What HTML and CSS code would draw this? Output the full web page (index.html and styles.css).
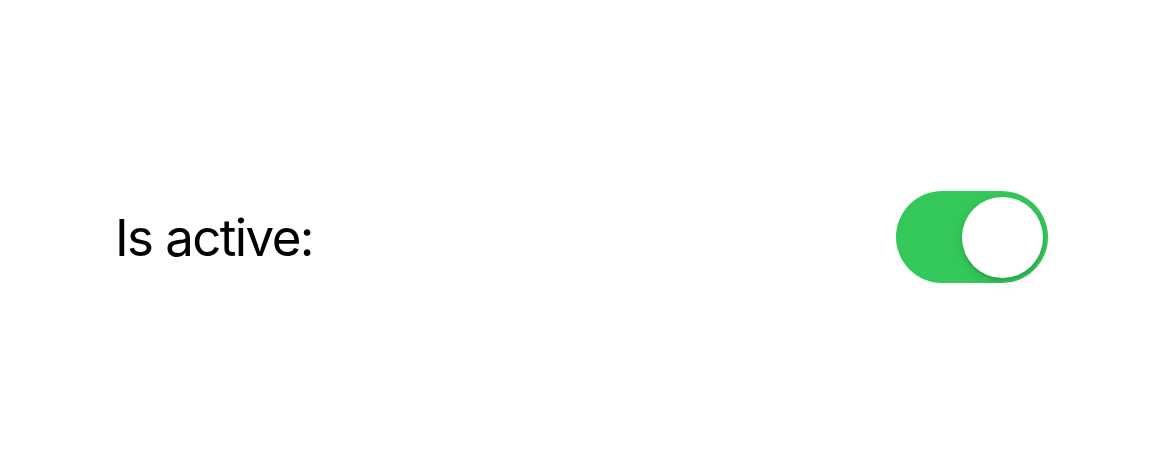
FILE: index.html
```html
<!DOCTYPE html>
<html>
<head>
<meta charset="utf-8">
<link rel="stylesheet" href="styles.css">
</head>
<body>
<div class="page">
  <div class="row">
    <span class="label">Is active:</span>
    <div class="toggle"><div class="knob"></div></div>
  </div>
</div>
</body>
</html>
```
FILE: styles.css
```css
html, body { margin: 0; padding: 0; background: #fff; }
.page {
  width: 1152px;
  height: 460px;
  display: flex;
  align-items: flex-start;
}
.row {
  margin-top: 191px;
  width: 100%;
  box-sizing: border-box;
  padding: 0 104px 0 115px;
  display: flex;
  align-items: center;
  justify-content: space-between;
}
.label {
  font-family: Inter, "Noto Sans", sans-serif;
  font-size: 51px;
  color: #000;
  letter-spacing: -1.6px;
}
.toggle {
  width: 152px;
  height: 92px;
  border-radius: 46px;
  background: #34c759;
  display: flex;
  align-items: center;
  justify-content: flex-end;
  padding-right: 5px;
  box-sizing: border-box;
}
.knob {
  width: 81px;
  height: 81px;
  border-radius: 50%;
  background: #fff;
  box-shadow: 0 3px 8px rgba(0,0,0,0.15), 0 3px 1px rgba(0,0,0,0.06);
}
```
